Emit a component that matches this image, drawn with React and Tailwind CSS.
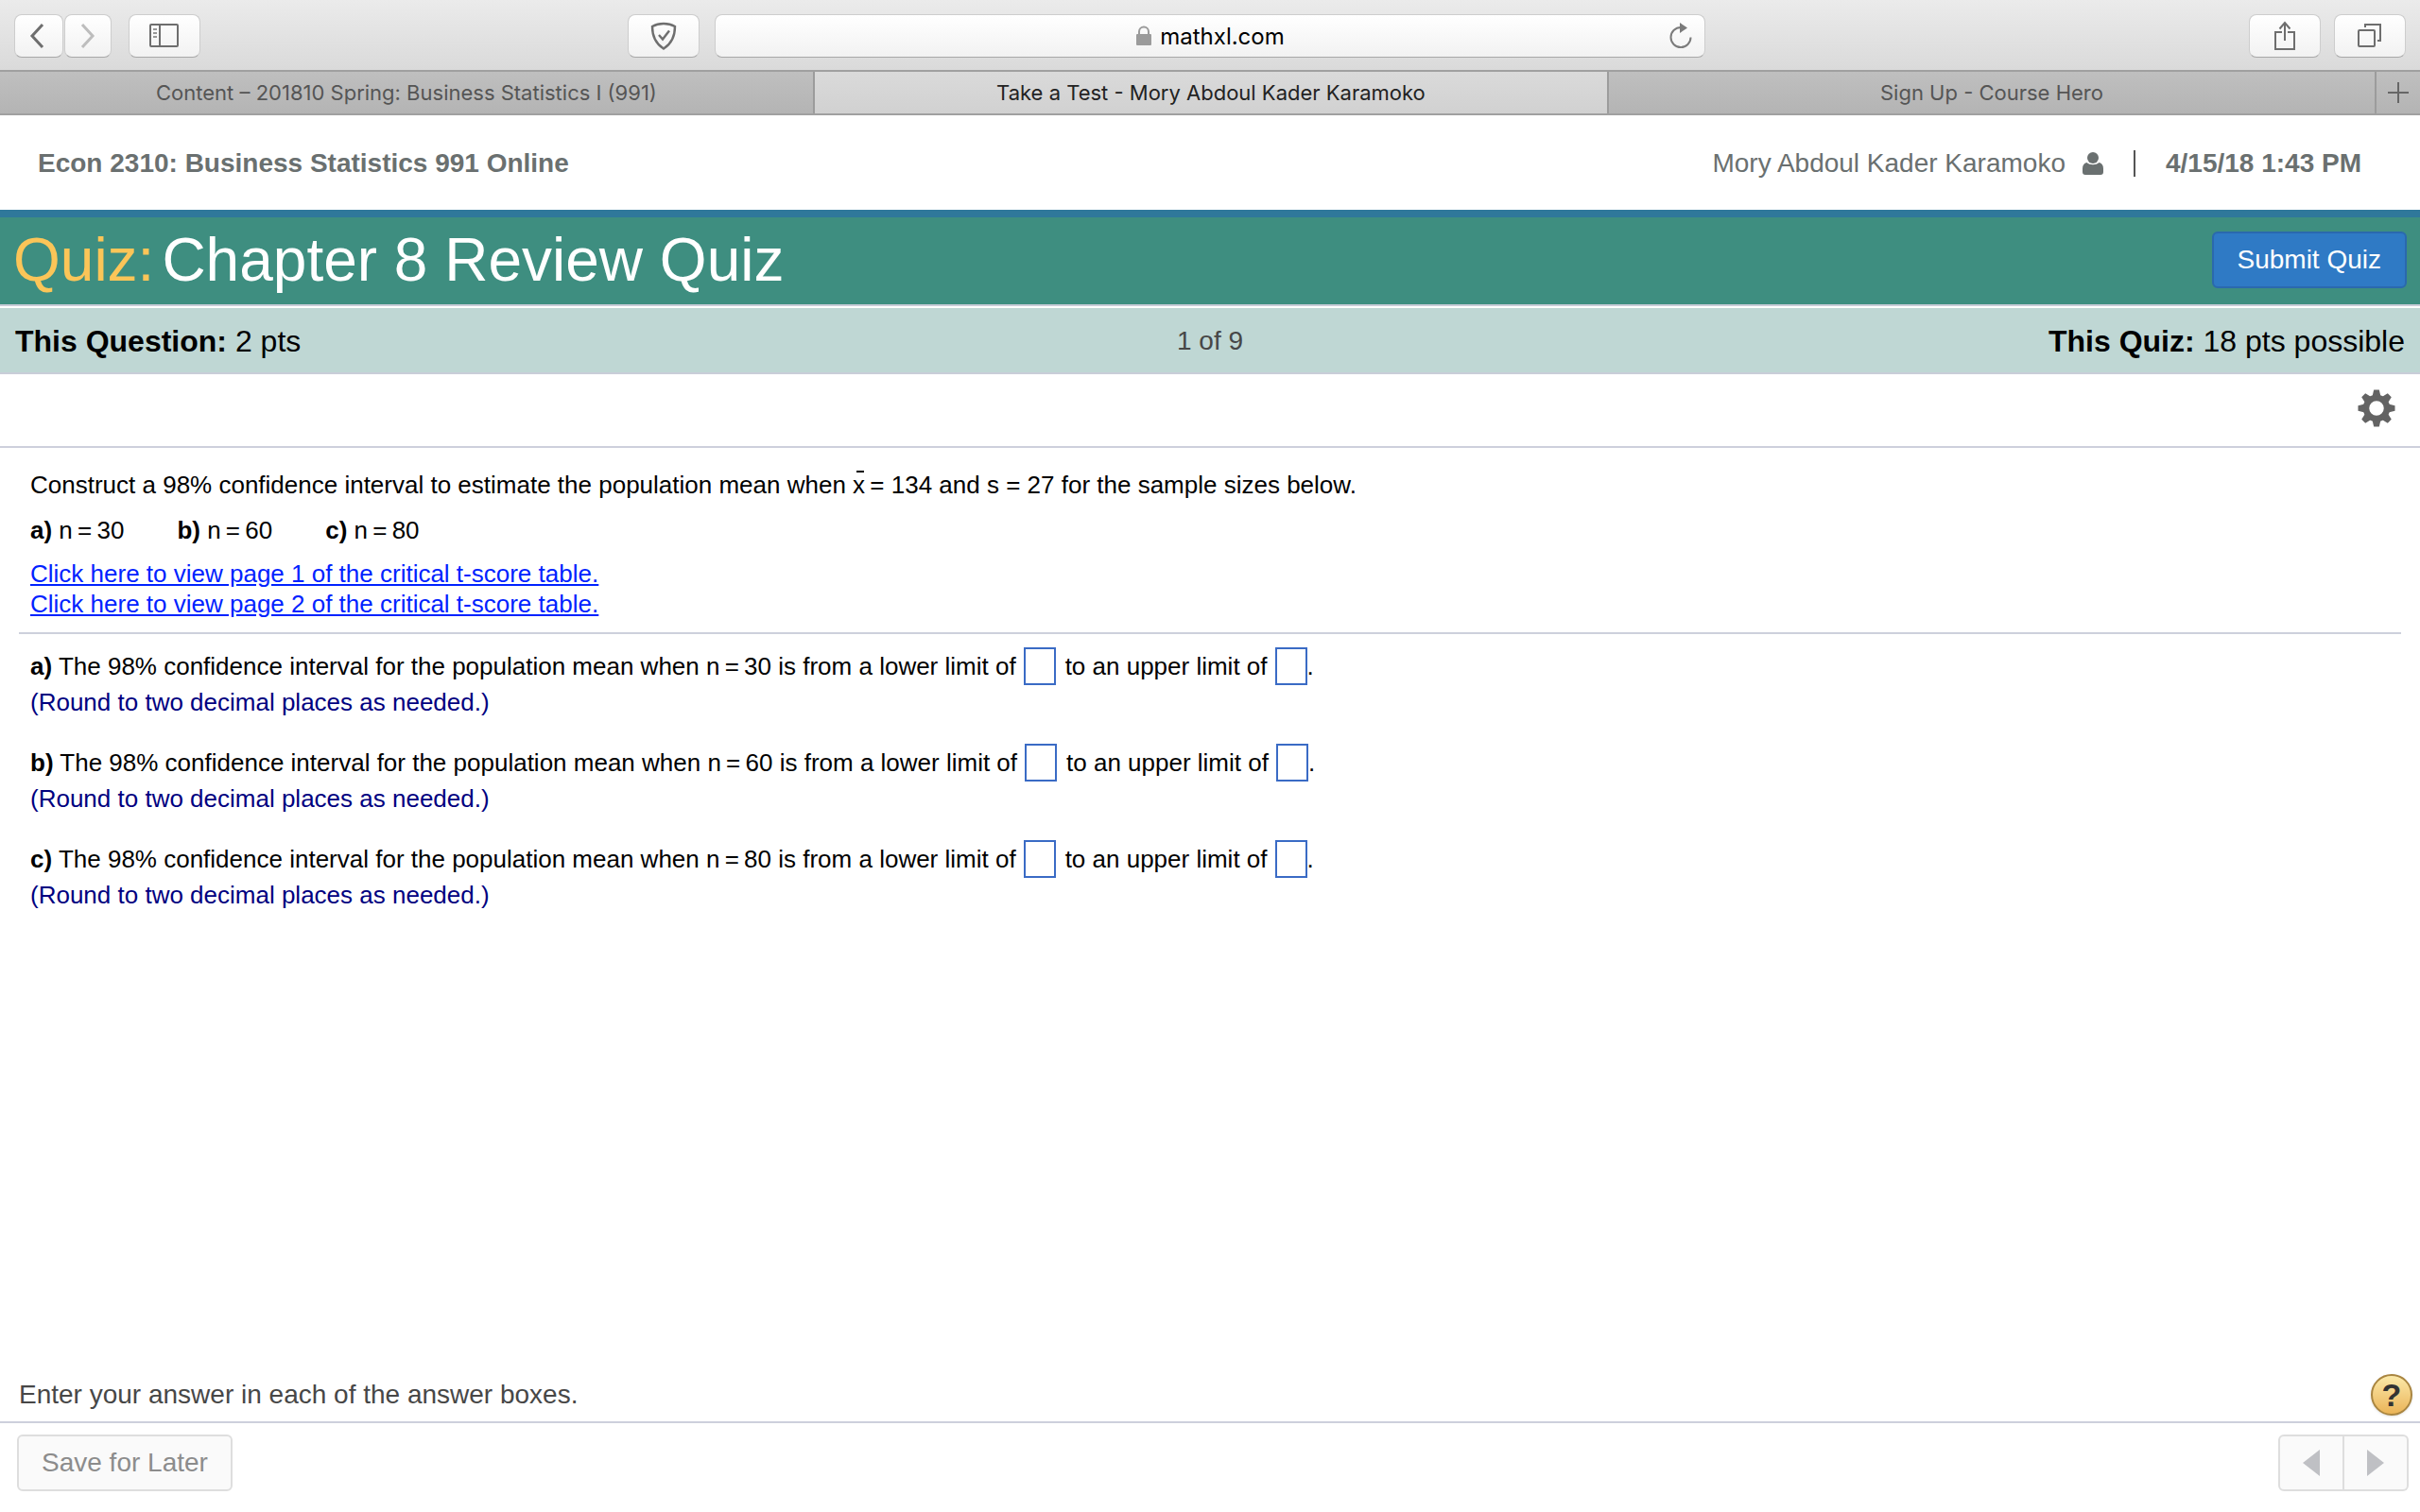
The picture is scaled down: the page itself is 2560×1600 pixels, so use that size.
import { useState } from 'react'

const TABS = [
  { title: 'Content – 201810 Spring: Business Statistics I (991)', className: 'flex-[862] bg-linear-to-b from-[#bfbfbf] to-[#b4b4b4] text-[#555]' },
  { title: 'Take a Test - Mory Abdoul Kader Karamoko', className: 'flex-[840] bg-linear-to-b from-[#dadada] to-[#d1d1d1] text-[#222]' },
  { title: 'Sign Up - Course Hero', className: 'flex-[812] bg-linear-to-b from-[#bfbfbf] to-[#b4b4b4] text-[#555]' },
]

const PARTS = [
  { id: 'a', n: 30 },
  { id: 'b', n: 60 },
  { id: 'c', n: 80 },
]

// Thin space, used around the equals sign in formulas
const THIN = '\u2009'

export default function App() {
  return (
    <div className="flex min-h-screen flex-col bg-white font-['Liberation_Sans',Arial,sans-serif] text-black">
      <BrowserToolbar />
      <TabBar />
      <CourseHeader />
      <QuizHeader />
      <Question />
      <Footer />
    </div>
  )
}

function ToolbarButton({ label, className, children }) {
  return (
    <button
      type="button"
      aria-label={label}
      className={`flex h-[46px] items-center justify-center rounded-lg border border-[#cdcdcd] border-b-[#a8a8a8] bg-linear-to-b from-white to-[#f2f2f2] text-[#6e6e6e] ${className}`}
    >
      {children}
    </button>
  )
}

function BrowserToolbar() {
  return (
    <div className="grid h-[74px] grid-cols-[1fr_auto_1fr] items-center gap-4 bg-linear-to-b from-[#ebebeb] to-[#dadada] px-[15px] pt-0.5">
      <div className="flex items-center">
        <div className="flex gap-px">
          <ToolbarButton label="Back" className="w-[52px]">
            <svg className="mr-1" width="16" height="28" viewBox="0 0 16 28" fill="none" stroke="currentColor" strokeWidth="3">
              <path d="M14 2L3 14l11 12" />
            </svg>
          </ToolbarButton>
          <ToolbarButton label="Forward" className="w-[50px]">
            <svg width="16" height="28" viewBox="0 0 16 28" fill="none" stroke="#bdbdbd" strokeWidth="3">
              <path d="M2 2l11 12L2 26" />
            </svg>
          </ToolbarButton>
        </div>
        <ToolbarButton label="Show sidebar" className="ml-[18px] w-[76px]">
          <svg width="32" height="26" viewBox="0 0 32 26" fill="none" stroke="currentColor" strokeWidth="2">
            <rect x="1" y="1" width="29" height="23" rx="1" />
            <path d="M11 1v23" />
            <path d="M4 6h4M4 10h4M4 14h4" strokeOpacity="0.7" />
          </svg>
        </ToolbarButton>
        <ToolbarButton label="Privacy report" className="ml-auto w-[76px]">
          <svg width="28" height="30" viewBox="0 0 28 30" fill="none" stroke="currentColor" strokeWidth="2.4">
            <path d="M14 2C9.500 2 5.500 3 2 5c0 11 4 18.500 12 23.500C22 23.500 26 16 26 5c-3.500-2-7.500-3-12-3z" />
            <path d="M9 14l4 4.500 7-9" />
          </svg>
        </ToolbarButton>
      </div>

      <div className="flex h-[46px] w-[1048px] items-center rounded-lg border border-[#cdcdcd] border-b-[#a8a8a8] bg-linear-to-b from-white to-[#f2f2f2] px-[11px]">
        <span className="w-7" />
        <div className="flex flex-1 items-center justify-center gap-2">
          <svg width="18" height="22" viewBox="0 0 18 22">
            <path d="M4 10V6.500a5 5 0 0 1 10 0V10" fill="none" stroke="#9b9b9b" strokeWidth="2" />
            <rect x="1" y="9" width="16" height="12" rx="1" fill="#9b9b9b" />
          </svg>
          <span className="pt-0.5 font-['Inter',sans-serif] text-2xl">mathxl.com</span>
        </div>
        <button type="button" aria-label="Reload" className="text-[#7b7b7b]">
          <svg width="28" height="28" viewBox="0 0 28 28">
            <path d="M14 5a10.500 10.500 0 1 0 10.500 10.500" fill="none" stroke="currentColor" strokeWidth="2" />
            <path d="M13 0l8 5.500-8 5.500z" fill="currentColor" />
          </svg>
        </button>
      </div>

      <div className="flex items-center justify-end gap-[14px]">
        <ToolbarButton label="Share" className="w-[76px]">
          <svg width="24" height="32" viewBox="0 0 24 32" fill="none" stroke="currentColor" strokeWidth="2">
            <path d="M9 12H2v18h20V12h-7" />
            <path d="M12 21V2M6.500 8.500L12 2l5.500 6.500" />
          </svg>
        </ToolbarButton>
        <ToolbarButton label="Show all tabs" className="w-[76px]">
          <svg width="26" height="26" viewBox="0 0 26 26" fill="none" stroke="currentColor" strokeWidth="2">
            <rect x="1" y="7" width="17" height="17" rx="1" />
            <path d="M8 4V1h16v17h-3" />
          </svg>
        </ToolbarButton>
      </div>
    </div>
  )
}

function TabBar() {
  return (
    <div className="flex h-12 border-y-2 border-[#a0a0a0] font-['Inter',sans-serif] text-[22px]">
      {TABS.map((tab) => (
        <button key={tab.title} type="button" className={`border-r-2 border-[#9c9c9c] ${tab.className}`}>
          {tab.title}
        </button>
      ))}
      <button type="button" aria-label="New tab" className="flex w-[46px] items-center justify-center bg-linear-to-b from-[#bfbfbf] to-[#b4b4b4]">
        <svg width="22" height="22" viewBox="0 0 22 22" stroke="#666" strokeWidth="2">
          <path d="M11 0v22M0 11h22" />
        </svg>
      </button>
    </div>
  )
}

function CourseHeader() {
  return (
    <header className="flex h-[100px] items-center justify-between pt-0.5 pr-[62px] pl-10 text-[28px] text-[#6a7070]">
      <span className="font-bold">Econ 2310: Business Statistics 991 Online</span>
      <div className="flex items-center">
        <span>Mory Abdoul Kader Karamoko</span>
        <svg className="ml-[18px]" width="22" height="24" viewBox="0 0 22 24" fill="currentColor">
          <circle cx="11" cy="6" r="6" />
          <path d="M4.500 11c3.500 3 9.500 3 13 0 3 .5 4.500 3 4.500 6.500V21c0 2-1 3-3 3H3c-2 0-3-1-3-3v-3.500C0 14 1.500 11.500 4.500 11z" />
        </svg>
        <span className="mx-8 h-7 w-0.5 bg-[#555]" />
        <span className="font-bold">4/15/18 1:43 PM</span>
      </div>
    </header>
  )
}

function QuizHeader() {
  return (
    <>
      <div className="flex h-[102px] items-center justify-between border-t-8 border-b-2 border-t-[#2f789b] border-b-[#c9cdd8] bg-[#3e8e80] px-[14px] pb-0.5">
        <h1 className="flex gap-2 text-[64px] leading-none text-white">
          <span className="text-[#fbc558]">Quiz:</span>
          <span>Chapter 8 Review Quiz</span>
        </h1>
        <button type="button" className="h-[60px] rounded-md border-2 border-[#2a69ae] bg-[#2f7ac5] px-[25px] text-[28px] text-white">
          Submit Quiz
        </button>
      </div>
      <div className="mt-0.5 grid h-[70px] grid-cols-3 items-center border-b-2 border-[#c9cdd8] bg-[#bfd7d4] px-4 pt-0.5 text-[32px]">
        <span><b>This Question:</b> 2 pts</span>
        <span className="text-center text-[28px] text-[#474747]">1 of 9</span>
        <span className="text-right"><b>This Quiz:</b> 18 pts possible</span>
      </div>
      <div className="flex h-[78px] items-center justify-end border-b-2 border-[#cdd0dc] px-[26px] pb-1">
        <button type="button" aria-label="Settings">
          <svg width="40" height="40" viewBox="-20 -20 40 40">
            <circle r="11" fill="none" stroke="#636363" strokeWidth="6.5" />
            {[0, 45, 90, 135, 180, 225, 270, 315].map((angle) => (
              <path key={angle} d="M-4.500-12.500l1.700-7h5.600l1.700 7z" fill="#636363" transform={`rotate(${angle})`} />
            ))}
          </svg>
        </button>
      </div>
    </>
  )
}

function Question() {
  const [answers, setAnswers] = useState({})

  function handleChange(e) {
    setAnswers({ ...answers, [e.target.name]: e.target.value })
  }

  return (
    <main className="flex-1 px-5 text-[26px]">
      {/* Problem statement */}
      <div className="border-b-2 border-[#cdd0dc] px-3 pt-[23px] pb-[14px]">
        <p className="leading-8">
          Construct a 98% confidence interval to estimate the population mean when{' '}
          <span className="relative">
            x
            <span className="absolute top-0 left-1 h-0.5 w-2 bg-black" />
          </span>
          {THIN}= 134 and s = 27 for the sample sizes below.
        </p>
        <div className="mt-4 flex gap-14 leading-8">
          {PARTS.map((part) => (
            <span key={part.id}><b>{part.id})</b> n{THIN}={THIN}{part.n}</span>
          ))}
        </div>
        <div className="mt-[14px] flex flex-col items-start leading-8 text-[#0022ff] underline">
          <a href="#page1">Click here to view page 1 of the critical t-score table.</a>
          <a href="#page2">Click here to view page 2 of the critical t-score table.</a>
        </div>
      </div>

      {/* Answers */}
      <div className="flex flex-col gap-[26px] px-3 pt-[14px]">
        {PARTS.map((part) => (
          <div key={part.id}>
            <div className="flex h-10 items-center">
              <span><b>{part.id})</b> The 98% confidence interval for the population mean when n{THIN}={THIN}{part.n} is from a lower limit of</span>
              <AnswerBox name={`${part.id}-lower`} label={`${part.id}) lower limit`} answers={answers} onChange={handleChange} />
              <span className="ml-2.5">to an upper limit of</span>
              <AnswerBox name={`${part.id}-upper`} label={`${part.id}) upper limit`} answers={answers} onChange={handleChange} />
              <span>.</span>
            </div>
            <p className="leading-9 text-[#000080]">(Round to two decimal places as needed.)</p>
          </div>
        ))}
      </div>
    </main>
  )
}

function AnswerBox({ name, label, answers, onChange }) {
  return (
    <input
      type="text"
      name={name}
      aria-label={label}
      className="ml-2 h-10 w-[34px] border-2 border-[#3a6bc5] text-center outline-none"
      value={answers[name] || ''}
      onChange={onChange}
    />
  )
}

function Footer() {
  return (
    <footer>
      <div className="flex h-[60px] items-center justify-between border-b-2 border-[#cdd0dc] pt-0.5 pr-2 pl-5 text-[28px] text-[#474747]">
        <span>Enter your answer in each of the answer boxes.</span>
        <button
          type="button"
          aria-label="Help"
          className="flex size-11 items-center justify-center rounded-full border-2 border-[#a98540] bg-linear-to-b from-[#fbe9a8] to-[#eab457] text-[34px] leading-none font-bold text-[#333] shadow-sm"
        >
          ?
        </button>
      </div>
      <div className="flex h-[94px] items-start justify-between px-3 pt-3">
        <button type="button" className="ml-1.5 h-[60px] rounded-md border-2 border-[#dedede] bg-[#fafafa] px-6 text-[28px] text-[#8c8c8c]">
          Save for Later
        </button>
        <div className="flex">
          <button type="button" aria-label="Previous question" className="flex h-[60px] w-[70px] items-center justify-center rounded-l-md border-2 border-[#dedede] bg-[#fafafa]">
            <svg width="18" height="28" viewBox="0 0 18 28" fill="#bfc0c4"><path d="M18 0v28L0 14z" /></svg>
          </button>
          <button type="button" aria-label="Next question" className="flex h-[60px] w-[68px] items-center justify-center rounded-r-md border-2 border-l-0 border-[#dedede] bg-[#fafafa]">
            <svg width="18" height="28" viewBox="0 0 18 28" fill="#bfc0c4"><path d="M0 0v28l18-14z" /></svg>
          </button>
        </div>
      </div>
    </footer>
  )
}
